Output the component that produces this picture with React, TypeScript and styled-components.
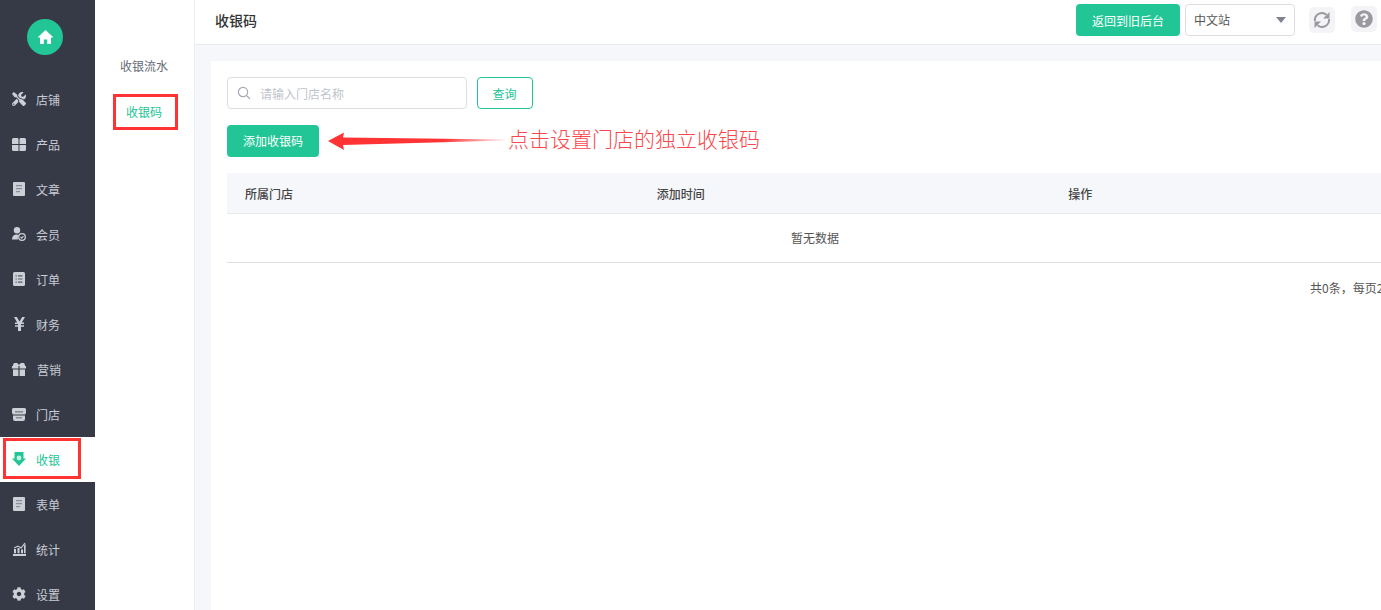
import React from "react";
import styled, { createGlobalStyle } from "styled-components";
import { FaTools, FaCog, FaQuestionCircle } from "react-icons/fa";

const Global = createGlobalStyle`
  html, body { margin: 0; padding: 0; height: 100%; overflow: hidden; background: #f6f7fb; }
  body { font-family: "Noto Sans CJK SC", "Liberation Sans", sans-serif; font-size: 12px; color: #555; }
  *, *::before, *::after { box-sizing: border-box; }
`;

const GREEN = "#22c595";
const RED = "#ff3333";
const NAV_BG = "#363a47";

const Page = styled.div`
  display: flex;
  width: 1381px;
  height: 610px;
  overflow: hidden;
`;
const Sidebar = styled.aside`
  flex: 0 0 95px;
  height: 610px;
  background: ${NAV_BG};
  overflow: hidden;
`;
const LogoWrap = styled.div`
  height: 77px;
  padding: 19px 5px 0 0;
  display: flex;
  justify-content: center;
`;
const Logo = styled.div`
  width: 36px;
  height: 36px;
  border-radius: 50%;
  background: ${GREEN};
  color: #fff;
  display: flex;
  align-items: center;
  justify-content: center;
`;
const NavItem = styled.div<{ $active?: boolean }>`
  position: relative;
  height: 45px;
  display: flex;
  align-items: center;
  padding-left: 12px;
  gap: 10px;
  font-size: 12px;
  background: ${(p) => (p.$active ? "#fff" : "transparent")};
  color: ${(p) => (p.$active ? GREEN : "#c8ccd4")};
  ${(p) =>
    p.$active &&
    `&::after {
      content: "";
      position: absolute;
      left: 3px;
      top: 1px;
      width: 78px;
      height: 41px;
      border: 3px solid ${RED};
    }`}
`;
const NavIcon = styled.span<{ $active?: boolean }>`
  width: 14px;
  height: 15px;
  margin-top: -1px;
  display: flex;
  align-items: center;
  justify-content: center;
  font-size: 14px;
  color: ${(p) => (p.$active ? GREEN : "#cbcfd6")};
`;
const NavLabel = styled.span<{ $shift?: number }>`
  margin-left: ${(p) => p.$shift ?? 0}px;
`;
const SubNav = styled.nav`
  flex: 0 0 100px;
  height: 610px;
  background: #fff;
  border-right: 1px solid #eceef2;
  padding-top: 42px;
  display: flex;
  flex-direction: column;
  align-items: center;
`;
const SubItem = styled.div<{ $active?: boolean }>`
  position: relative;
  height: 46px;
  width: 100%;
  padding-right: 1px;
  display: flex;
  align-items: center;
  justify-content: center;
  color: ${(p) => (p.$active ? GREEN : "#666b75")};
  ${(p) =>
    p.$active &&
    `&::after {
      content: "";
      position: absolute;
      left: 18px;
      top: 6px;
      width: 65px;
      height: 36px;
      border: 3px solid ${RED};
    }`}
`;
const Main = styled.main`
  flex: 1 0 0;
  min-width: 0;
  display: flex;
  flex-direction: column;
`;
const TopBar = styled.header`
  height: 45px;
  flex: none;
  background: #fff;
  border-bottom: 1px solid #e9ebf0;
  display: flex;
  align-items: flex-start;
  padding: 4px 4px 0 20px;
`;
const Title = styled.h1`
  margin: 0 auto 0 0;
  height: 32px;
  line-height: 33px;
  font-size: 14px;
  font-weight: 500;
  color: #333;
`;
const ReturnButton = styled.button`
  width: 104px;
  height: 32px;
  border: 0;
  border-radius: 4px;
  padding: 0;
  background: ${GREEN};
  color: #fff;
  font: inherit;
`;
const SiteSelect = styled.div`
  position: relative;
  width: 110px;
  height: 32px;
  margin-left: 5px;
  border: 1px solid #dcdee2;
  border-radius: 4px;
  line-height: 30px;
  padding-left: 8px;
  color: #555;
  &::after {
    content: "";
    position: absolute;
    right: 8px;
    top: 12px;
    border-left: 5px solid transparent;
    border-right: 5px solid transparent;
    border-top: 6px solid #7d8390;
  }
`;
const IconTile = styled.div<{ $left: number; $top: number }>`
  width: 26px;
  height: 26px;
  margin: ${(p) => p.$top}px 0 0 ${(p) => p.$left}px;
  border-radius: 5px;
  background: #f4f4f6;
  color: #99999f;
  display: flex;
  align-items: center;
  justify-content: center;
  font-size: 18px;
`;
const Content = styled.div`
  flex: 1;
  padding: 16px 0 0 16px;
  overflow: hidden;
`;
const Card = styled.section`
  width: 1300px;
  height: 600px;
  background: #fff;
  padding: 16px;
`;
const SearchRow = styled.div`
  display: flex;
  gap: 10px;
`;
const SearchBox = styled.div`
  width: 240px;
  height: 32px;
  border: 1px solid #dcdee2;
  border-radius: 4px;
  display: flex;
  align-items: center;
  padding-left: 9px;
  gap: 9px;
  color: #c0c4cc;
`;
const QueryButton = styled.button`
  width: 56px;
  height: 32px;
  padding: 0 1px 0 0;
  border: 1px solid ${GREEN};
  border-radius: 4px;
  background: #fff;
  color: ${GREEN};
  font: inherit;
`;
const ActionRow = styled.div`
  display: flex;
  align-items: center;
  margin-top: 16px;
  height: 32px;
`;
const AddButton = styled.button`
  width: 92px;
  height: 32px;
  padding: 0 0 1px;
  border: 0;
  border-radius: 4px;
  background: ${GREEN};
  color: #fff;
  font: inherit;
`;
const Arrow = styled.svg`
  flex: none;
  width: 180px;
  height: 32px;
  margin-left: 9px;
`;
const Annotation = styled.span`
  margin-top: -6px;
  font-size: 21px;
  font-weight: 300;
  color: #f9484c;
  white-space: nowrap;
`;
const Table = styled.div`
  width: 1235px;
  margin-top: 16px;
`;
const HeadRow = styled.div`
  display: grid;
  grid-template-columns: repeat(3, 1fr);
  height: 41px;
  align-items: center;
  background: #f6f7fb;
  border-bottom: 1px solid #e8eaee;
`;
const HeadCell = styled.div`
  padding-left: 18px;
  font-weight: 500;
  color: #444;
`;
const EmptyRow = styled.div`
  height: 49px;
  line-height: 47px;
  border-bottom: 1px solid #dfdfdf;
  color: #555;
  padding-left: 564px;
`;
const Pagination = styled.div`
  margin-top: 15px;
  padding-left: 1083px;
  white-space: nowrap;
  line-height: 20px;
  color: #555;
`;

const House = () => (
  <svg width="15" height="14" viewBox="0 0 15 14">
    <path fill="currentColor" d="M7.500 0L15 7l-1 1-1-.9V14H9.200V9.500H5.800V14H2V7.100L1 8 0 7z" />
  </svg>
);
const Doc = () => (
  <svg width="12" height="14" viewBox="0 0 12 14">
    <rect width="12" height="14" rx="1" fill="currentColor" />
    <path fill="#8a8e9a" d="M3 3h6v1.300H3zM3 6h6v1.300H3zM3 9h4v1.300H3z" />
  </svg>
);
const ListDoc = () => (
  <svg width="12" height="14" viewBox="0 0 12 14">
    <rect width="12" height="14" rx="1.500" fill="currentColor" />
    <path fill="#5b5f6c" d="M2.500 3.200h1.300v1.200H2.500zM5 3.200h4.500v1.200H5zM2.500 6.400h1.300v1.200H2.500zM5 6.400h4.500v1.200H5zM2.500 9.600h1.300v1.200H2.500zM5 9.600h4.500v1.200H5z" />
  </svg>
);
const Quad = () => (
  <svg width="14" height="13" viewBox="0 0 14 13">
    <path fill="currentColor" d="M1.500 0h4A1.500 1.500 0 0 1 6.500 1.500V6H0V1.500A1.500 1.500 0 0 1 1.500 0zM8.500 0h4A1.500 1.500 0 0 1 14 1.500V6H7.500V1.500A1.500 1.500 0 0 1 8.500 0zM0 7h6.500v6h-5A1.500 1.500 0 0 1 0 11.500zM7.500 7H14v4.500a1.500 1.500 0 0 1-1.500 1.500h-5z" />
  </svg>
);
const UserCheck = () => (
  <svg width="14" height="14" viewBox="0 0 14 14">
    <circle cx="5" cy="3.200" r="3.200" fill="currentColor" />
    <path fill="currentColor" d="M0 12.500c0-3.300 2-5 4.500-5 1 0 2 .2 2.500.6A4.200 4.200 0 0 0 6 12.500z" />
    <circle cx="10" cy="10" r="3.300" fill="none" stroke="currentColor" strokeWidth="1.300" />
    <path fill="none" stroke="currentColor" strokeWidth="1.100" d="M8.500 9.800l1.200 1.300 1.800-2" />
  </svg>
);
const Yen = () => (
  <svg width="11" height="14" viewBox="0 0 11 14">
    <path fill="currentColor" d="M0 0h2.800L5.500 4.500 8.200 0H11L7.800 5.500H10V7H7v1.300h3v1.500H7V14H4V9.800H1V8.300h3V7H1V5.500h2.200z" />
  </svg>
);
const Gift = () => (
  <svg width="14" height="13" viewBox="0 0 14 13">
    <path fill="currentColor" d="M2 0h3.200l1.800 2 1.800-2H12l1 2v1H14v2.500H7.600V3H6.400v2.500H0V3h1V2zM1 6.500h5.400V13H1zM7.600 6.500H13V13H7.600z" />
  </svg>
);
const Store = () => (
  <svg width="14" height="13" viewBox="0 0 14 13">
    <path fill="currentColor" d="M2.500 0h9a2 2 0 0 1 2.500 2.500V5a2 2 0 0 1-2 1.500H2A2 2 0 0 1 0 5V2.500A2 2 0 0 1 2.500 0z" />
    <path fill="currentColor" d="M1 7.500h12V11a2 2 0 0 1-2 2H3a2 2 0 0 1-2-2z" />
    <rect x="3" y="3.300" width="8" height="1.100" fill="#6a6e7b" />
    <rect x="4" y="9.300" width="6" height="1" fill="#6a6e7b" />
  </svg>
);
const Cashier = () => (
  <svg width="14" height="14" viewBox="0 0 14 14">
    <path fill="currentColor" d="M2.500 0h9v6.500H14L7 14 0 6.500h2.500z" />
    <circle cx="7" cy="6" r="2.400" fill="#c9f2e3" />
  </svg>
);
const Chart = () => (
  <svg width="13" height="14" viewBox="0 0 13 14">
    <path fill="currentColor" d="M0 12h13v2H0zM1 7h2v4.200H1zM4.500 6h2v5.200h-2zM8 7.500h2v3.700H8zM11 3.500l1.600-1.700v9.400H11z" />
    <path fill="currentColor" d="M.8 5.500L5 3.500l3 1.800L11.500.8l1 .4-4.200 5.500L5 4.800 1.200 6.500z" />
  </svg>
);
const Sync = () => (
  <svg width="20" height="20" viewBox="0 0 20 20" fill="none" stroke="currentColor" strokeWidth="2">
    <path d="M3 11a7 7 0 0 1 11.500-6.200" />
    <path d="M17 9a7 7 0 0 1-11.500 6.200" />
    <path fill="currentColor" stroke="none" d="M17.500 2v6.500H11zM2.500 18v-6.500H9z" />
  </svg>
);
const Glass = () => (
  <svg width="14" height="14" viewBox="0 0 14 14" fill="none" stroke="#a4a8b3" strokeWidth="1.200">
    <circle cx="6" cy="6" r="4.600" />
    <path d="M9.400 9.400L13 13" />
  </svg>
);

const navItems: { label: string; icon: React.ReactNode; active?: boolean; shift?: number }[] = [
  { label: "店铺", icon: <FaTools /> },
  { label: "产品", icon: <Quad /> },
  { label: "文章", icon: <Doc /> },
  { label: "会员", icon: <UserCheck /> },
  { label: "订单", icon: <ListDoc /> },
  { label: "财务", icon: <Yen /> },
  { label: "营销", icon: <Gift />, shift: 1 },
  { label: "门店", icon: <Store /> },
  { label: "收银", icon: <Cashier />, active: true },
  { label: "表单", icon: <Doc /> },
  { label: "统计", icon: <Chart /> },
  { label: "设置", icon: <FaCog /> },
];

export default function App() {
  return (
    <Page>
      <Global />
      <Sidebar>
        <LogoWrap>
          <Logo>
            <House />
          </Logo>
        </LogoWrap>
        {navItems.map((n) => (
          <NavItem key={n.label} $active={n.active}>
            <NavIcon $active={n.active}>{n.icon}</NavIcon>
            <NavLabel $shift={n.shift}>{n.label}</NavLabel>
          </NavItem>
        ))}
      </Sidebar>
      <SubNav>
        <SubItem>收银流水</SubItem>
        <SubItem $active>收银码</SubItem>
      </SubNav>
      <Main>
        <TopBar>
          <Title>收银码</Title>
          <ReturnButton>返回到旧后台</ReturnButton>
          <SiteSelect>中文站</SiteSelect>
          <IconTile $left={14} $top={3}>
            <Sync />
          </IconTile>
          <IconTile $left={16} $top={2}>
            <FaQuestionCircle />
          </IconTile>
        </TopBar>
        <Content>
          <Card>
            <SearchRow>
              <SearchBox>
                <Glass />
                <span>请输入门店名称</span>
              </SearchBox>
              <QueryButton>查询</QueryButton>
            </SearchRow>
            <ActionRow>
              <AddButton>添加收银码</AddButton>
              <Arrow viewBox="0 0 180 32">
                <defs>
                  <linearGradient id="fade" x1="0" x2="1" y1="0" y2="0">
                    <stop offset="0" stopColor="#ff3333" />
                    <stop offset="0.65" stopColor="#ff3333" />
                    <stop offset="1" stopColor="#ff3333" stopOpacity="0.1" />
                  </linearGradient>
                </defs>
                <path fill="url(#fade)" d="M0 16L16 7.500 15 12.500 177 14.500 177 15.500 15 20 16 25z" />
              </Arrow>
              <Annotation>点击设置门店的独立收银码</Annotation>
            </ActionRow>
            <Table>
              <HeadRow>
                <HeadCell>所属门店</HeadCell>
                <HeadCell>添加时间</HeadCell>
                <HeadCell>操作</HeadCell>
              </HeadRow>
              <EmptyRow>暂无数据</EmptyRow>
              <Pagination>共0条，每页20条</Pagination>
            </Table>
          </Card>
        </Content>
      </Main>
    </Page>
  );
}
